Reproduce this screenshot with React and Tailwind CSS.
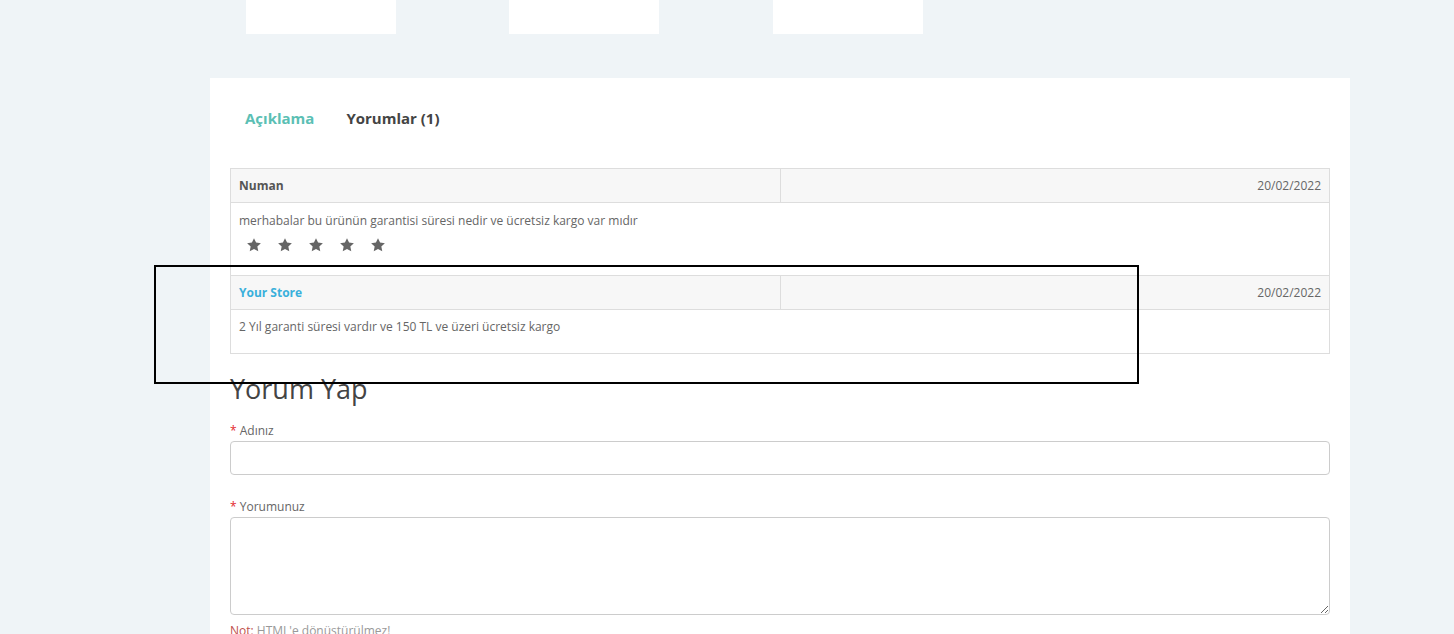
import { useState } from 'react';

function Star() {
  return (
    <span className="w-[31px] flex justify-center">
      <svg width="16" height="16" viewBox="0 0 24 24" fill="#666">
        <path d="M12 1.8l3.1 6.6 7.2.9-5.3 5 1.4 7.1L12 17.9l-6.4 3.5 1.4-7.1-5.3-5 7.2-.9z" />
      </svg>
    </span>
  );
}

export default function App() {
  const [tab, setTab] = useState('review');
  const [name, setName] = useState('');
  const [text, setText] = useState('');

  return (
    <div className="relative w-full h-[634px] overflow-hidden bg-[#eff4f7] text-[12px] text-[#666] font-['Open_Sans',sans-serif]">
      {/* ürün küçük resimleri */}
      <div className="flex pl-[246px]">
        <div className="w-[150px] h-[34px] bg-white" />
        <div className="ml-[113px] w-[150px] h-[34px] bg-white" />
        <div className="ml-[114px] w-[150px] h-[34px] bg-white" />
      </div>

      <div className="ml-[210px] mt-[44px] w-[1140px] bg-white px-[20px] pt-[20px] pb-[40px]">
        {/* sekmeler */}
        <ul className="flex h-[40px] items-center">
          <li>
            <button
              onClick={() => setTab('desc')}
              className="px-[15px] text-[15px] font-bold leading-[20px] text-[#5bbfb4]"
            >
              Açıklama
            </button>
          </li>
          <li>
            <button
              onClick={() => setTab('review')}
              className="px-[15px] ml-[2px] text-[15px] font-bold leading-[20px] text-[#444]"
            >
              Yorumlar (1)
            </button>
          </li>
        </ul>

        {tab === 'review' && (
          <>
            <table className="mt-[30px] w-full border-collapse border border-[#ddd] text-[12px] leading-[17px]">
              <tbody>
                <tr className="bg-[#f7f7f7]">
                  <td className="w-1/2 border border-[#ddd] px-[8px] py-[8px] font-bold text-[#555]">Numan</td>
                  <td className="border border-[#ddd] px-[8px] py-[8px] text-right">20/02/2022</td>
                </tr>
                <tr>
                  <td colSpan={2} className="border border-[#ddd] px-[8px] pt-[9px] pb-[8px]">
                    <p>merhabalar bu ürünün garantisi süresi nedir ve ücretsiz kargo var mıdır</p>
                    <div className="flex h-[38px] pt-[8px] -ml-[1px]">
                      <Star />
                      <Star />
                      <Star />
                      <Star />
                      <Star />
                    </div>
                  </td>
                </tr>
                <tr className="bg-[#f7f7f7]">
                  <td className="w-1/2 border border-[#ddd] px-[8px] py-[8px] font-bold text-[#3ab0db]">Your Store</td>
                  <td className="border border-[#ddd] px-[8px] py-[8px] text-right">20/02/2022</td>
                </tr>
                <tr>
                  <td colSpan={2} className="border border-[#ddd] px-[8px] pt-[8px] pb-[18px]">
                    2 Yıl garanti süresi vardır ve 150 TL ve üzeri ücretsiz kargo
                  </td>
                </tr>
              </tbody>
            </table>

            <h2 className="mt-[20px] text-[27px] leading-[1.1] font-normal text-[#444]">Yorum Yap</h2>

            <div className="mt-[18px]">
              <label className="block leading-[17px] mb-[2px]">
                <span className="text-[#e3262b]">* </span>Adınız
              </label>
              <input
                value={name}
                onChange={(e) => setName(e.target.value)}
                className="block w-full h-[34px] rounded-[4px] border border-[#ccc] px-3 text-[#555] outline-none"
              />
            </div>

            <div className="mt-[23px]">
              <label className="block leading-[17px] mb-[2px]">
                <span className="text-[#e3262b]">* </span>Yorumunuz
              </label>
              <textarea
                value={text}
                onChange={(e) => setText(e.target.value)}
                className="block w-full h-[98px] rounded-[4px] border border-[#ccc] px-3 py-2 text-[#555] outline-none"
              />
              <p className="mt-[7px] leading-[17px] text-[#999]">
                <span className="text-[#c0504d]">Not:</span> HTML'e dönüştürülmez!
              </p>
            </div>
          </>
        )}
      </div>

      {/* işaretleme kutusu */}
      <div className="absolute left-[154px] top-[265px] w-[985px] h-[119px] border-2 border-black" />
    </div>
  );
}
